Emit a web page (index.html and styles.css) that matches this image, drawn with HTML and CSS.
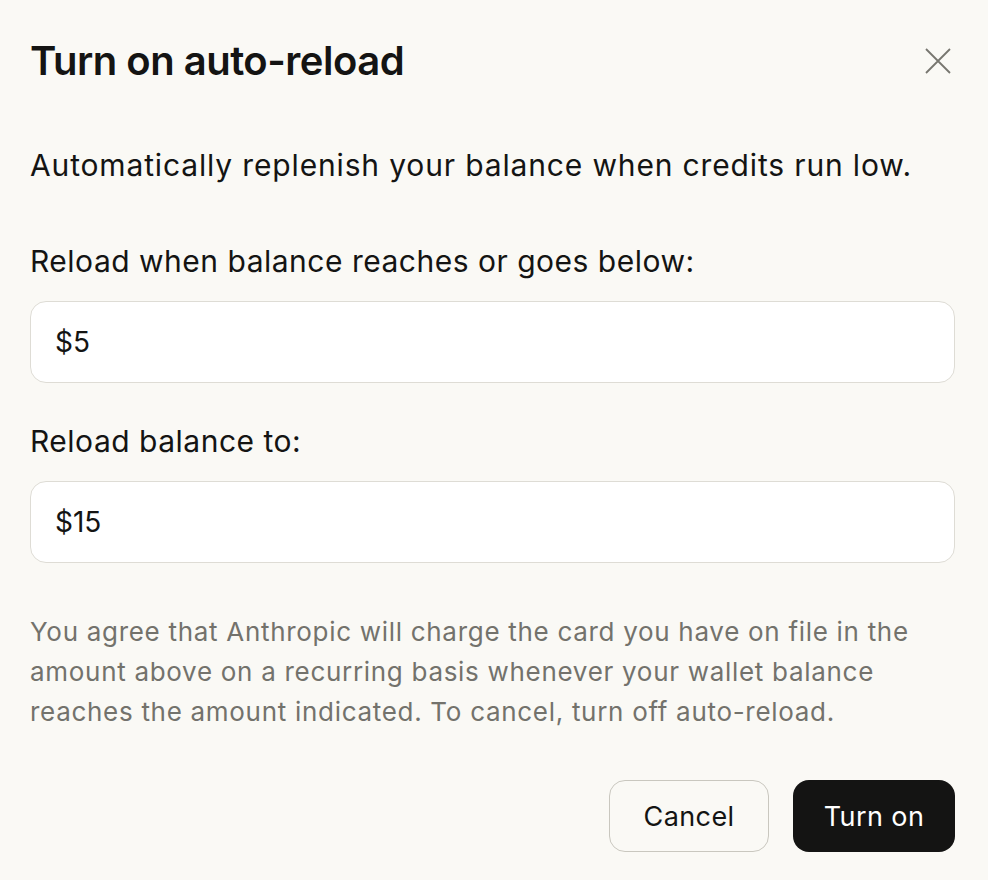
FILE: index.html
```html
<!DOCTYPE html>
<html lang="en">

<head>
    <meta charset="UTF-8">
    <meta name="viewport" content="width=device-width, initial-scale=1.0">
    <title>Turn on auto-reload</title>
    <link rel="stylesheet" href="styles.css">
</head>

<body>
    <div class="dialog">
        <div class="head">
            <h1 class="title">Turn on auto-reload</h1>
            <button class="close" type="button" aria-label="Close">
                <svg width="26" height="26" viewBox="0 0 26 26">
                    <path d="M1 1L25 25M25 1L1 25" stroke="#77766f" stroke-width="1.8" fill="none" />
                </svg>
            </button>
        </div>

        <p class="desc">Automatically replenish your balance when credits run low.</p>

        <div class="field">
            <label class="label">Reload when balance reaches or goes below:</label>
            <input class="input" type="text" value="$5">
        </div>

        <div class="field">
            <label class="label">Reload balance to:</label>
            <input class="input" type="text" value="$15">
        </div>

        <p class="note">You agree that Anthropic will charge the card you have on file in the amount above on a recurring basis whenever your wallet balance reaches the amount indicated. To cancel, turn off auto-reload.</p>

        <div class="actions">
            <button class="btn cancel" type="button">Cancel</button>
            <button class="btn primary" type="button">Turn on</button>
        </div>
    </div>
</body>

</html>
```

FILE: styles.css
```css
body,
h1,
p {
    margin: 0;
    padding: 0;
}

body {
    background-color: #faf9f5;
    font-family: Inter, "Noto Sans", sans-serif;
    color: #141413;
}

.dialog {
    padding: 38px 33px 0 30px;
}

.head {
    display: flex;
    justify-content: space-between;
    align-items: center;
}

.title {
    font-size: 40px;
    font-weight: 600;
    letter-spacing: -0.5px;
    line-height: 46px;
}

.close {
    border: none;
    background: none;
    padding: 0;
    margin-right: 4px;
    width: 26px;
    height: 26px;
    cursor: pointer;
}

.desc {
    font-size: 30px;
    letter-spacing: 0.85px;
    line-height: 40px;
    margin-top: 61px;
}

.field {
    margin-top: 56px;
}

.field + .field {
    margin-top: 38px;
}

.label {
    display: block;
    font-size: 30px;
    letter-spacing: 0.5px;
    line-height: 40px;
}

.input {
    display: block;
    box-sizing: border-box;
    width: 100%;
    height: 82px;
    margin-top: 20px;
    padding: 0 24px;
    border: 1.5px solid #dedcd5;
    border-radius: 16px;
    background-color: #fff;
    font-family: inherit;
    font-size: 28px;
    color: #141413;
    outline: none;
}

.note {
    margin-top: 49px;
    font-size: 26px;
    letter-spacing: 0.7px;
    line-height: 40px;
    color: #73726c;
}

.actions {
    display: flex;
    justify-content: flex-end;
    gap: 24px;
    margin-top: 48px;
}

.btn {
    height: 72px;
    border-radius: 16px;
    font-family: inherit;
    font-size: 27px;
    letter-spacing: 0.4px;
    cursor: pointer;
}

.cancel {
    width: 160px;
    border: 1.5px solid #c9c7bf;
    background-color: #faf9f5;
    color: #141413;
}

.primary {
    width: 162px;
    border: none;
    background-color: #141413;
    color: #fff;
}
```
